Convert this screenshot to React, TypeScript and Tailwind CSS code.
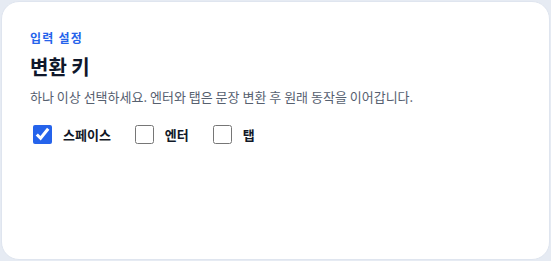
import { useState } from 'react';

type KeyId = 'space' | 'enter' | 'tab';

const keys: { id: KeyId; label: string }[] = [
  { id: 'space', label: '스페이스' },
  { id: 'enter', label: '엔터' },
  { id: 'tab', label: '탭' },
];

export default function App() {
  const [selected, setSelected] = useState<KeyId[]>(['space']);

  const toggle = (id: KeyId) => {
    setSelected((prev) => (prev.includes(id) ? prev.filter((k) => k !== id) : [...prev, id]));
  };

  return (
    <div
      className="h-[261px] w-[551px] bg-[#e6ebf3] p-px"
      style={{ fontFamily: '"Noto Sans CJK KR", "Noto Sans", sans-serif' }}
    >
      <section className="h-full rounded-[18px] border border-[#dfe5ef] bg-white px-7 pt-[27px]">
        <p className="text-[12px] font-semibold leading-[18px] tracking-[0.1em] text-[#2563eb]">입력 설정</p>
        <h2 className="mt-[6px] text-[20px] font-bold leading-[28px] text-[#0f172a]">변환 키</h2>
        <p className="mt-[7px] text-[13px] leading-[18px] text-[#56606f]">
          하나 이상 선택하세요. 엔터와 탭은 문장 변환 후 원래 동작을 이어갑니다.
        </p>
        <div className="ml-[3px] mt-[19px] flex items-center gap-6">
          {keys.map((key) => (
            <label key={key.id} className="flex cursor-pointer items-center gap-[11px]">
              <input
                type="checkbox"
                checked={selected.includes(key.id)}
                onChange={() => toggle(key.id)}
                className="m-0 h-[19px] w-[19px] accent-[#2563eb]"
              />
              <span className="text-[13px] font-bold text-[#111827]">{key.label}</span>
            </label>
          ))}
        </div>
      </section>
    </div>
  );
}
